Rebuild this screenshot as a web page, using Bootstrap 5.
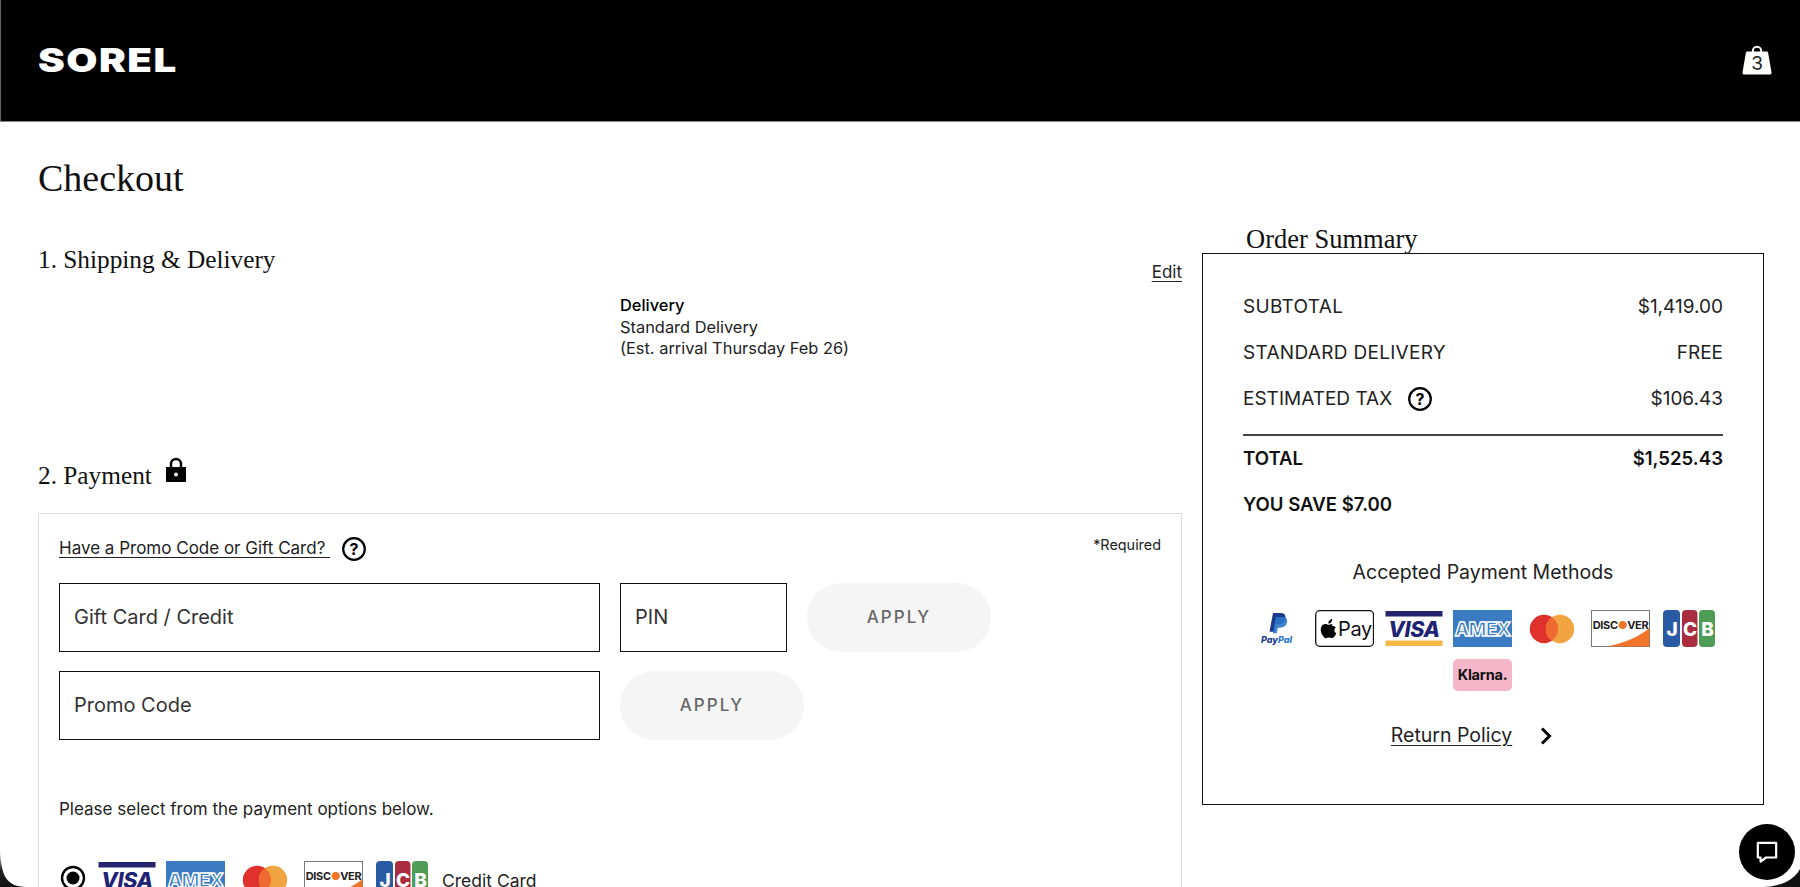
<!doctype html>
<html lang="en">
<head>
<meta charset="utf-8">
<title>Checkout</title>
<link href="https://cdn.jsdelivr.net/npm/bootstrap@5.3.0/dist/css/bootstrap.min.css" rel="stylesheet">
<style>
html,body{height:887px;overflow:hidden;background:#fff}
body{font-family:Inter,"Liberation Sans",sans-serif;color:#222;font-size:17px;position:relative}
.topbar{height:122px;background:#000;border-bottom:1px solid #888;border-left:1px solid #666;padding:0 28px 0 37px}
.brand{font-family:Inter,sans-serif;font-weight:900;font-size:33px;line-height:1;letter-spacing:1.2px;color:#fff;transform:scaleX(1.22);transform-origin:left center}
.bagbtn{width:30px;height:30px;margin-top:-2px}
.page{padding:33px 36px 0 38px;gap:20px}
.leftcol{width:1144px}
.rightcol{width:562px;padding-top:68px}
.pagetitle{font-family:"Liberation Serif",serif;font-weight:400;font-size:38px;line-height:46px;margin:0 0 42px;color:#111}
.sectitle{font-family:"Liberation Serif",serif;font-weight:400;font-size:25.300px;line-height:32px;margin:0;color:#111}
.shiprow{height:42px}
.textlink{color:#222;text-decoration:underline;text-underline-offset:3px}
.delivery{margin:10px 0 0 582px;line-height:21.500px;font-size:16.400px;height:66px}
.paytitle{margin-top:98px;margin-bottom:22px;height:32px}
.lockicon{margin:-2px 0 0 5px}
.paybox{border:1px solid #ddd;border-bottom:0;padding:21px 20px 0;height:400px}
.promohead{height:28px;margin-bottom:20px}
.reqnote{font-size:14.400px;margin-top:-8px}
.helpgap{margin-left:12px}
.fieldrow{gap:20px;margin-bottom:19px}
.fieldrow .form-control{height:69px;border:1px solid #111;border-radius:0;font-size:20px;padding:0 14px 2px;color:#222;flex:none}
.fieldrow .form-control::placeholder{color:#333;opacity:1}
.fgift{width:541px!important}
.fpin{width:167px!important}
.applybtn{width:184px;height:69px;border-radius:35px;background:#f5f5f5;border:0;color:#666;font-size:17px;font-weight:500;letter-spacing:2px}
.selectnote{margin-top:58px;line-height:22px}
.methodrow{margin-top:41px;height:37px}
.radiodot{width:26px;height:26px;margin:4px 1px 0 1px;flex:none}
.paycell{width:59px;height:37px;flex:none}
.methodgap{gap:10px}
.cclabel{font-size:17.500px;margin-left:0;padding-top:7px}
.summarylabel{font-family:"Liberation Serif",serif;font-weight:400;font-size:26.500px;line-height:32px;margin:0 0 0 44px;color:#111;height:30px;white-space:nowrap}
.summarybox{border:1px solid #111;height:552px;padding:30px 40px 0;font-size:19px}
.sumrow{height:46px}
.sumlabel{letter-spacing:.3px}
.sumrule{border-top:2px solid #444;margin:0;opacity:1;margin-top:12px}
.sumstrong{font-weight:600;color:#111;font-size:18.600px}
.acceptline{text-align:center;margin-top:31px;line-height:26px;font-size:19.500px}
.cardwrap{width:473px;margin:25px 0 0 3px;row-gap:12px;column-gap:10px}
.returnrow{margin:29px 22px 0 0;height:32px;gap:27px;font-size:19.500px}
.chatbubble{position:fixed;left:1739px;top:824px;width:56px;height:56px;border-radius:50%;background:#000;z-index:5}
.cornerleft{position:fixed;left:0;bottom:0;width:34px;height:38px;z-index:4}
.cornerright{position:fixed;right:0;bottom:0;width:36px;height:18px;z-index:4}
svg text{font-family:Inter,"Liberation Sans",sans-serif}
</style>
</head>
<body>
<svg width="0" height="0" class="position-absolute">
<defs>
<symbol id="ic-help" viewBox="0 0 24 24"><circle cx="12" cy="12" r="10.800" fill="none" stroke="#000" stroke-width="2.200"/><text x="12" y="17.600" text-anchor="middle" font-size="16" font-weight="700" fill="#000">?</text></symbol>
<symbol id="pm-paypal" viewBox="0 0 59 37">
<path d="M27 3h7.500c3.600 0 5.600 2 5 5.300-.7 4-3.500 6-7.500 6h-2.500l-1.300 7.400H23.500z" fill="#1c3a8c"/>
<path d="M30 7h6.500c3.200 0 5.200 1.800 4.600 5-.7 3.700-3.300 5.700-7 5.700h-2.300l-1 5.600h-4z" fill="#2a75c9" opacity=".9"/>
<text x="15" y="33" font-size="9" font-weight="800" font-style="italic"><tspan fill="#1c3a8c">Pay</tspan><tspan fill="#2a75c9">Pal</tspan></text>
</symbol>
<symbol id="pm-apple" viewBox="0 0 59 37">
<rect x=".7" y=".7" width="57.800" height="35.600" rx="4" fill="#fff" stroke="#111" stroke-width="1.300"/>
<path d="M16.200 12.200c.7-.9 1.100-2 1-3.100-1 0-2.100.7-2.800 1.500-.6.7-1.100 1.900-1 3 1.100.1 2.200-.6 2.800-1.400zm1 1.700c-1.500-.1-2.900.9-3.600.9-.8 0-1.900-.8-3.100-.8-1.600 0-3 .9-3.900 2.300-1.700 2.900-.4 7.200 1.200 9.500.8 1.100 1.800 2.400 3 2.400 1.200-.1 1.700-.8 3.100-.8 1.500 0 1.900.8 3.200.7 1.300 0 2.100-1.100 2.900-2.300.9-1.300 1.300-2.600 1.300-2.700-1.700-.7-3-3.700-.5-5.600-.9-1.300-2.400-1.600-3.600-1.600z" fill="#000"/>
<text x="23" y="25.500" font-size="20" font-weight="400" fill="#111" letter-spacing="-.3">Pay</text>
</symbol>
<symbol id="pm-visa" viewBox="0 0 59 37">
<rect x="1.500" y="1" width="57" height="5.500" fill="#25256f"/>
<rect x="1.500" y="30.500" width="57" height="5.500" fill="#f3b944"/>
<text x="30" y="26.500" text-anchor="middle" font-size="21.500" font-weight="800" font-style="italic" fill="#1f2374" letter-spacing="-.4">VISA</text>
</symbol>
<symbol id="pm-amex" viewBox="0 0 59 37">
<rect width="59" height="37" fill="#3a7bc2"/>
<text x="29.500" y="25.500" text-anchor="middle" font-size="19" font-weight="800" fill="#3a7bc2" stroke="#fff" stroke-width="1.400" letter-spacing="-.8">AMEX</text>
</symbol>
<symbol id="pm-mc" viewBox="0 0 59 37">
<circle cx="22" cy="19" r="14.200" fill="#e0322c"/>
<circle cx="38" cy="19" r="14.200" fill="#f0a442"/>
<path d="M30 7.300a14.200 14.200 0 0 1 0 23.400a14.200 14.200 0 0 1 0-23.400z" fill="#ef6a30"/>
</symbol>
<symbol id="pm-disc" viewBox="0 0 59 37">
<rect x=".5" y=".5" width="58" height="36" fill="#fff" stroke="#777"/>
<path d="M16 36.500C34 33 49 26 58.500 18V36.500z" fill="#f0752b"/>
<text x="29.500" y="19" text-anchor="middle" font-size="11" font-weight="700" fill="#222" letter-spacing="-.3">DISC<tspan fill="#f0752b">●</tspan>VER</text>
</symbol>
<symbol id="pm-jcb" viewBox="0 0 59 37">
<rect x="3" y="0" width="17" height="37" rx="4" fill="#2a5aa3"/>
<rect x="22" y="0" width="15.500" height="37" rx="4" fill="#a92d3e"/>
<rect x="39" y="0" width="16" height="37" rx="4" fill="#4f9c56"/>
<text x="12" y="26" text-anchor="middle" font-size="19" font-weight="800" fill="#fff">J</text>
<text x="30" y="26" text-anchor="middle" font-size="19" font-weight="800" fill="#fff">C</text>
<text x="47.500" y="26" text-anchor="middle" font-size="19" font-weight="800" fill="#fff">B</text>
</symbol>
<symbol id="pm-klarna" viewBox="0 0 59 32">
<rect width="59" height="32" rx="5" fill="#f4b6c8"/>
<text x="29.500" y="21" text-anchor="middle" font-size="14.500" font-weight="700" fill="#111" letter-spacing="-.2">Klarna.</text>
</symbol>
</defs>
</svg>

<header class="topbar d-flex align-items-center justify-content-between">
  <span class="brand">SOREL</span>
  <svg class="bagbtn" viewBox="0 0 30 30" aria-label="Bag, 3 items">
    <circle cx="15" cy="6" r="4.200" fill="none" stroke="#fff" stroke-width="2"/>
    <path d="M5.500 6.500h19c.8 0 1.400.5 1.600 1.300l3.400 19.400c.2 1.500-.7 2.300-2 2.300H2.500c-1.300 0-2.200-.8-2-2.300L3.900 7.800c.2-.8.800-1.300 1.600-1.300z" fill="#fff"/>
    <text x="15" y="25" text-anchor="middle" font-size="19" fill="#222">3</text>
  </svg>
</header>

<main class="page d-flex align-items-start">
  <section class="leftcol">
    <h1 class="pagetitle">Checkout</h1>
    <div class="shiprow d-flex justify-content-between align-items-start">
      <h2 class="sectitle">1. Shipping &amp; Delivery</h2>
      <a class="textlink align-self-end" href="#">Edit</a>
    </div>
    <div class="delivery">
      <div class="fw-medium text-black">Delivery</div>
      <div>Standard Delivery</div>
      <div>(Est. arrival Thursday Feb 26)</div>
    </div>
    <div class="paytitle d-flex align-items-start gap-2">
      <h2 class="sectitle">2. Payment</h2>
      <svg width="22" height="26" viewBox="0 0 22 26" class="lockicon"><path d="M6 11V7a5 5 0 0 1 10 0v4" fill="none" stroke="#000" stroke-width="2.400"/><rect x="1" y="10" width="20" height="15" fill="#000"/><circle cx="11" cy="17.500" r="2" fill="#fff"/></svg>
    </div>
    <div class="paybox">
      <div class="promohead d-flex justify-content-between align-items-center">
        <div class="d-flex align-items-center">
          <a class="textlink" href="#">Have a Promo Code or Gift Card?&nbsp;</a>
          <svg width="24" height="24" class="helpgap"><use href="#ic-help"/></svg>
        </div>
        <span class="reqnote">*Required</span>
      </div>
      <div class="fieldrow d-flex">
        <input class="form-control fgift" placeholder="Gift Card / Credit" aria-label="Gift Card / Credit">
        <input class="form-control fpin" placeholder="PIN" aria-label="PIN">
        <button class="applybtn" type="button">APPLY</button>
      </div>
      <div class="fieldrow d-flex">
        <input class="form-control fgift" placeholder="Promo Code" aria-label="Promo Code">
        <button class="applybtn" type="button">APPLY</button>
      </div>
      <p class="selectnote mb-0">Please select from the payment options below.</p>
      <div class="methodrow d-flex align-items-start methodgap">
        <svg class="radiodot" viewBox="0 0 26 26"><circle cx="13" cy="13" r="11" fill="#fff" stroke="#000" stroke-width="2.400"/><circle cx="13" cy="13" r="6.500" fill="#000"/></svg>
        <svg class="paycell"><use href="#pm-visa"/></svg>
        <svg class="paycell"><use href="#pm-amex"/></svg>
        <svg class="paycell"><use href="#pm-mc"/></svg>
        <svg class="paycell"><use href="#pm-disc"/></svg>
        <svg class="paycell"><use href="#pm-jcb"/></svg>
        <span class="cclabel">Credit Card</span>
      </div>
    </div>
  </section>

  <aside class="rightcol">
    <h2 class="summarylabel">Order Summary</h2>
    <div class="summarybox">
      <div class="sumrow d-flex justify-content-between align-items-center"><span class="sumlabel">SUBTOTAL</span><span>$1,419.00</span></div>
      <div class="sumrow d-flex justify-content-between align-items-center"><span class="sumlabel">STANDARD DELIVERY</span><span>FREE</span></div>
      <div class="sumrow d-flex justify-content-between align-items-center"><span class="d-flex align-items-center">ESTIMATED TAX<svg width="24" height="24" class="ms-3"><use href="#ic-help"/></svg></span><span>$106.43</span></div>
      <hr class="sumrule">
      <div class="sumrow sumstrong d-flex justify-content-between align-items-center"><span>TOTAL</span><span>$1,525.43</span></div>
      <div class="sumrow sumstrong d-flex align-items-center"><span>YOU SAVE $7.00</span></div>
      <div class="acceptline">Accepted Payment Methods</div>
      <div class="cardwrap d-flex flex-wrap justify-content-center">
        <svg class="paycell"><use href="#pm-paypal"/></svg>
        <svg class="paycell"><use href="#pm-apple"/></svg>
        <svg class="paycell"><use href="#pm-visa"/></svg>
        <svg class="paycell"><use href="#pm-amex"/></svg>
        <svg class="paycell"><use href="#pm-mc"/></svg>
        <svg class="paycell"><use href="#pm-disc"/></svg>
        <svg class="paycell"><use href="#pm-jcb"/></svg>
        <svg width="59" height="32"><use href="#pm-klarna"/></svg>
      </div>
      <div class="returnrow d-flex justify-content-center align-items-center">
        <a class="textlink" href="#">Return Policy</a>
        <svg width="14" height="20" viewBox="0 0 14 20"><path d="M3 2.500l7.500 7.500L3 17.500" fill="none" stroke="#000" stroke-width="3"/></svg>
      </div>
    </div>
  </aside>
</main>

<svg class="cornerleft" viewBox="0 0 34 38" aria-hidden="true">
  <defs><linearGradient id="cornerfade" x1="0" y1="0" x2="0" y2="1"><stop offset="0" stop-color="#fff"/><stop offset=".55" stop-color="#222"/><stop offset="1" stop-color="#111"/></linearGradient></defs>
  <path d="M0 0C1 18 3 27 9 32.500S22 38 34 38H0z" fill="url(#cornerfade)"/>
</svg>
<svg class="cornerright" viewBox="0 0 36 18" aria-hidden="true"><path d="M0 18C18 17 30 11 36 0V18z" fill="#111"/></svg>
<div class="chatbubble d-flex align-items-center justify-content-center">
  <svg width="22" height="22" viewBox="0 0 24 24"><path d="M2 2h20v16H11l-6 4.500V18H2z" fill="none" stroke="#fff" stroke-width="2.400" stroke-linejoin="round"/></svg>
</div>
</body>
</html>
